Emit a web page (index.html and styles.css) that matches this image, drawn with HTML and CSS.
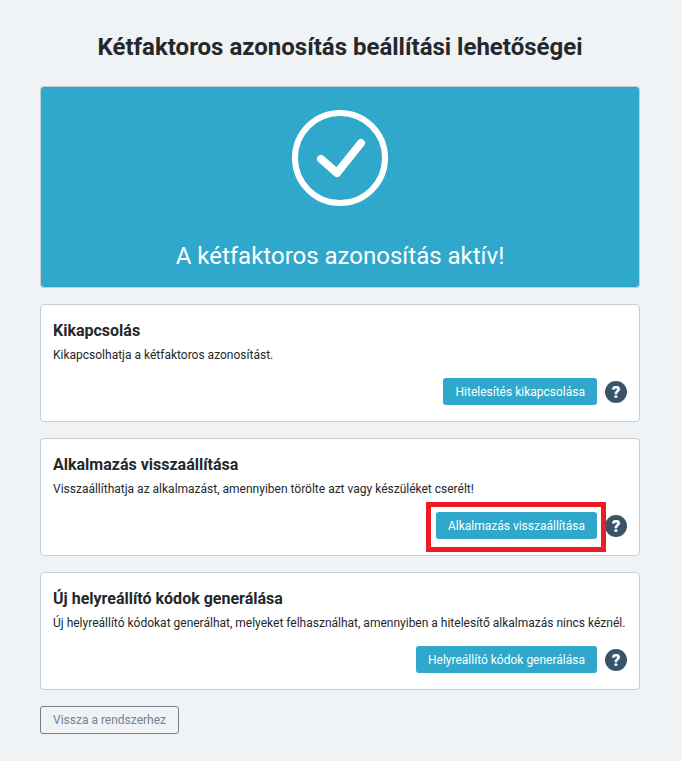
FILE: index.html
```html
<!DOCTYPE html>
<html lang="hu">
<head>
    <meta charset="UTF-8">
    <meta name="viewport" content="width=device-width, initial-scale=1.0">
    <title>Kétfaktoros azonosítás</title>
    <link rel="stylesheet" href="styles.css">
</head>
<body>
    <div class="page">
        <h1>Kétfaktoros azonosítás beállítási lehetőségei</h1>

        <div class="status">
            <svg class="status-icon" width="96" height="96" viewBox="0 0 96 96" aria-hidden="true">
                <circle cx="48" cy="48" r="45" fill="none" stroke="#fff" stroke-width="6"/>
                <path d="M29 49 L45 63 L69 33" fill="none" stroke="#fff" stroke-width="8" stroke-linecap="round" stroke-linejoin="round"/>
            </svg>
            <div class="status-text">A kétfaktoros azonosítás aktív!</div>
        </div>

        <div class="card">
            <h2>Kikapcsolás</h2>
            <p>Kikapcsolhatja a kétfaktoros azonosítást.</p>
            <div class="card-actions">
                <button class="btn">Hitelesítés kikapcsolása</button>
                <span class="help">?</span>
            </div>
        </div>

        <div class="card">
            <h2>Alkalmazás visszaállítása</h2>
            <p>Visszaállíthatja az alkalmazást, amennyiben törölte azt vagy készüléket cserélt!</p>
            <div class="card-actions">
                <div class="marked">
                    <button class="btn">Alkalmazás visszaállítása</button>
                    <span class="mark"></span>
                </div>
                <span class="help">?</span>
            </div>
        </div>

        <div class="card">
            <h2>Új helyreállító kódok generálása</h2>
            <p>Új helyreállító kódokat generálhat, melyeket felhasználhat, amennyiben a hitelesítő alkalmazás nincs kéznél.</p>
            <div class="card-actions">
                <button class="btn">Helyreállító kódok generálása</button>
                <span class="help">?</span>
            </div>
        </div>

        <button class="btn-back">Vissza a rendszerhez</button>
    </div>
</body>
</html>
```
FILE: styles.css
```css
body {
    font-family: Roboto, sans-serif;
    background: #f0f3f5;
    color: #23282c;
    margin: 0;
}
.page {
    width: 600px;
    margin-left: 40px;
    padding-top: 33px;
    padding-bottom: 27px;
}
h1 {
    margin: 0 0 25px;
    font-size: 24px;
    line-height: 28px;
    font-weight: 700;
    text-align: center;
}
.status {
    height: 202px;
    box-sizing: border-box;
    padding-top: 23px;
    margin-bottom: 16px;
    background: #2fa8cc;
    border: 1px solid #c8ced3;
    border-radius: 4px;
    color: #fff;
    text-align: center;
}
.status-icon {
    display: block;
    margin: 0 auto;
}
.status-text {
    margin-top: 36px;
    font-size: 24px;
    line-height: 29px;
}
.card {
    height: 118px;
    box-sizing: border-box;
    padding: 16px 12px 0;
    margin-bottom: 16px;
    background: #fff;
    border: 1px solid #c8ced3;
    border-radius: 4px;
}
.card h2 {
    margin: 0 0 6px;
    font-size: 16px;
    line-height: 19px;
    font-weight: 700;
}
.card p {
    margin: 0;
    font-size: 12px;
    line-height: 18px;
}
.card-actions {
    display: flex;
    justify-content: flex-end;
    align-items: center;
    gap: 8px;
    margin-top: 14px;
}
.btn {
    height: 27px;
    padding: 0 12px;
    background: #2fa8cc;
    color: #fff;
    border: none;
    border-radius: 3px;
    font-family: Roboto, sans-serif;
    font-size: 12px;
    font-weight: 400;
}
.help {
    width: 22px;
    height: 22px;
    border-radius: 50%;
    background: #3a5366;
    color: #fff;
    font-size: 17px;
    font-weight: 900;
    line-height: 22px;
    text-align: center;
}
.marked {
    position: relative;
    display: flex;
}
.mark {
    position: absolute;
    left: -10px;
    right: -9px;
    top: -10px;
    bottom: -13px;
    border: 5px solid #ed1c24;
}
.btn-back {
    display: block;
    width: 139px;
    height: 28px;
    padding: 0;
    background: transparent;
    color: #73818f;
    border: 1px solid #73818f;
    border-radius: 3px;
    font-family: Roboto, sans-serif;
    font-size: 12px;
}
```
